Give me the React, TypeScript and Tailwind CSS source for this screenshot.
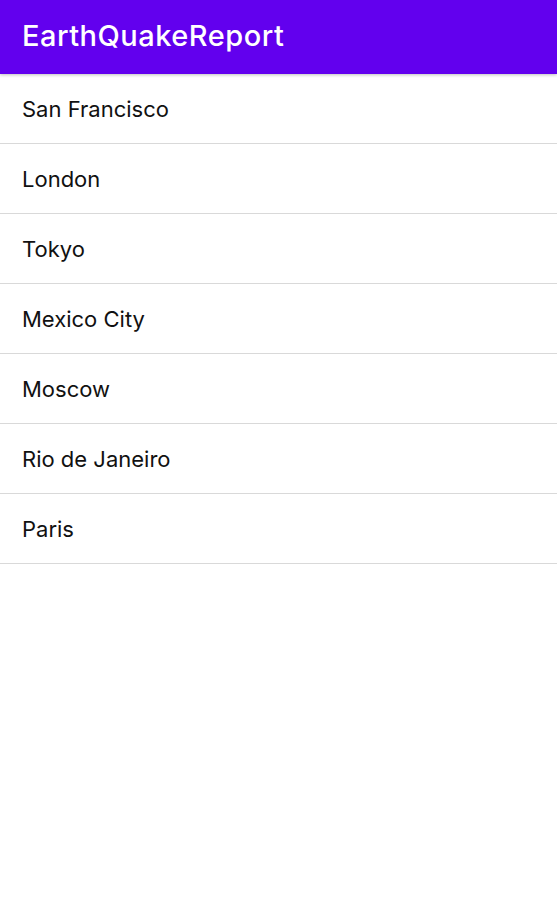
const CITIES = [
  "San Francisco",
  "London",
  "Tokyo",
  "Mexico City",
  "Moscow",
  "Rio de Janeiro",
  "Paris",
];

export default function App() {
  return (
    <div className="min-h-[913px] bg-white font-['Inter',sans-serif]">
      <header className="flex h-[74px] items-center bg-[#6200ee] px-[22px] pb-0.5 shadow-[0_1px_3px_rgba(0,0,0,0.25)]">
        <h1 className="text-[29px] font-medium tracking-[0.5px] text-white">EarthQuakeReport</h1>
      </header>
      <ul>
        {CITIES.map((city) => (
          <li
            key={city}
            className="flex h-[70px] items-center border-b border-[#d9d9d9] px-[22px] pt-0.5 text-[22px] text-[#111]"
          >
            {city}
          </li>
        ))}
      </ul>
    </div>
  );
}
